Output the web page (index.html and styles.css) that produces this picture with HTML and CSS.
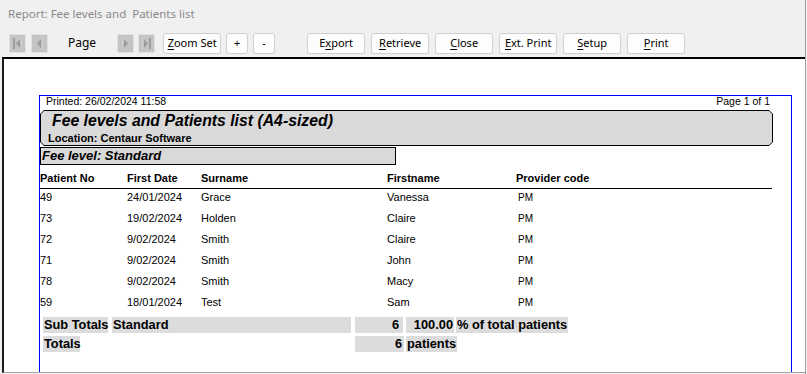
FILE: index.html
```html
<!DOCTYPE html>
<html lang="en">

<head>
    <meta charset="UTF-8">
    <title>Report: Fee levels and Patients list</title>
    <link rel="stylesheet" href="styles.css">
</head>

<body>
    <div class="window">

        <div class="titlebar">Report: Fee levels and&nbsp; Patients list</div>

        <div class="toolbar">
            <div class="navbtn first">
                <svg width="15" height="17" viewBox="0 0 15 17">
                    <rect x="3" y="3" width="2" height="11" fill="#9c9c9c" />
                    <path d="M11 3 L6 8.5 L11 14 Z" fill="#9c9c9c" />
                    <path d="M11 3 L11 14" stroke="#e4e4e4" stroke-width="1" />
                </svg>
            </div>
            <div class="navbtn">
                <svg width="15" height="17" viewBox="0 0 15 17">
                    <path d="M10 3 L5 8.5 L10 14 Z" fill="#9c9c9c" />
                    <path d="M10 3 L10 14" stroke="#e4e4e4" stroke-width="1" />
                </svg>
            </div>
            <span class="pagelabel">Page</span>
            <div class="navbtn next">
                <svg width="15" height="17" viewBox="0 0 15 17">
                    <path d="M5 3 L10 8.5 L5 14 Z" fill="#9c9c9c" />
                    <path d="M5 3 L5 14" stroke="#e4e4e4" stroke-width="1" />
                </svg>
            </div>
            <div class="navbtn">
                <svg width="15" height="17" viewBox="0 0 15 17">
                    <path d="M4 3 L9 8.5 L4 14 Z" fill="#9c9c9c" />
                    <path d="M4 3 L4 14" stroke="#e4e4e4" stroke-width="1" />
                    <rect x="10" y="3" width="2" height="11" fill="#9c9c9c" />
                </svg>
            </div>

            <div class="btn zoom"><u>Z</u>oom Set</div>
            <div class="btn small">+</div>
            <div class="btn small">-</div>

            <div class="btn action first-action">E<u>x</u>port</div>
            <div class="btn action"><u>R</u>etrieve</div>
            <div class="btn action"><u>C</u>lose</div>
            <div class="btn action"><u>E</u>xt. Print</div>
            <div class="btn action"><u>S</u>etup</div>
            <div class="btn action"><u>P</u>rint</div>
        </div>

        <div class="report">
            <div class="sheet">

                <div class="printed">
                    <span>Printed: 26/02/2024 11:58</span>
                    <span>Page 1 of 1</span>
                </div>

                <div class="titlebox">
                    <div class="titlebox-inner">
                        <div class="rep-title">Fee levels and Patients list (A4-sized)</div>
                        <div class="rep-location">Location: Centaur Software</div>
                    </div>
                </div>

                <div class="feelevel">Fee level: Standard</div>

                <div class="row head">
                    <div>Patient No</div>
                    <div>First Date</div>
                    <div>Surname</div>
                    <div>Firstname</div>
                    <div>Provider code</div>
                </div>

                <div class="row">
                    <div>49</div>
                    <div>24/01/2024</div>
                    <div>Grace</div>
                    <div>Vanessa</div>
                    <div class="code">PM</div>
                </div>
                <div class="row">
                    <div>73</div>
                    <div>19/02/2024</div>
                    <div>Holden</div>
                    <div>Claire</div>
                    <div class="code">PM</div>
                </div>
                <div class="row">
                    <div>72</div>
                    <div>9/02/2024</div>
                    <div>Smith</div>
                    <div>Claire</div>
                    <div class="code">PM</div>
                </div>
                <div class="row">
                    <div>71</div>
                    <div>9/02/2024</div>
                    <div>Smith</div>
                    <div>John</div>
                    <div class="code">PM</div>
                </div>
                <div class="row">
                    <div>78</div>
                    <div>9/02/2024</div>
                    <div>Smith</div>
                    <div>Macy</div>
                    <div class="code">PM</div>
                </div>
                <div class="row">
                    <div>59</div>
                    <div>18/01/2024</div>
                    <div>Test</div>
                    <div>Sam</div>
                    <div class="code">PM</div>
                </div>

                <div class="totals subtotals">
                    <div class="cell c-label">Sub Totals</div>
                    <div class="cell c-name">Standard</div>
                    <div class="cell c-count">6</div>
                    <div class="cell c-pct">100.00</div>
                    <div class="cell c-text">% of total patients</div>
                </div>
                <div class="totals grand">
                    <div class="cell c-totals">Totals</div>
                    <div class="cell c-count2">6</div>
                    <div class="cell c-text">patients</div>
                </div>

            </div>
        </div>
    </div>
</body>

</html>
```

FILE: styles.css
```css
html,
body {
    margin: 0;
    padding: 0;
}

* {
    box-sizing: border-box;
}

body {
    background: #f0f0f0;
    font-family: "Noto Sans", "Open Sans", sans-serif;
}

.window {
    width: 806px;
    height: 374px;
    border-right: 1px solid #a0a0a0;
    background: #f0f0f0;
    overflow: hidden;
}

.titlebar {
    height: 28px;
    line-height: 28px;
    padding-left: 8px;
    font-size: 11.5px;
    color: #8a8a8a;
}

/* toolbar */

.toolbar {
    display: flex;
    align-items: center;
    height: 21px;
    margin-top: 5px;
    padding-left: 9px;
}

.navbtn {
    width: 17px;
    height: 19px;
    border: 1px solid #e2e2e2;
    background: #c4c4c4;
    margin-right: 5px;
}

.navbtn svg {
    display: block;
}

.navbtn.next {
    margin-right: 4px;
}

.pagelabel {
    font-size: 12px;
    color: #000;
    margin: 0 21px 0 15px;
    padding-bottom: 3px;
}

.btn {
    height: 21px;
    line-height: 18px;
    border: 1px solid #d0d0d0;
    border-radius: 3px;
    background: #fdfdfd;
    font-size: 11px;
    color: #000;
    text-align: center;
    margin-right: 5px;
}

.btn u {
    text-decoration-thickness: 1px;
    text-underline-offset: 2px;
}

.zoom {
    width: 58px;
    margin-left: 3px;
}

.small {
    width: 22px;
}

.action {
    width: 58px;
    margin-right: 6px;
}

.first-action {
    margin-left: 27px;
}

/* report */

.report {
    height: 316px;
    margin-top: 3px;
    margin-left: 2px;
    border-top: 2px solid #000;
    border-left: 2px solid #1a1a1a;
    border-bottom: 1px solid #a0a0a0;
    background: #fff;
    overflow: hidden;
}

.sheet {
    width: 753px;
    height: 400px;
    margin: 36px 0 0 35px;
    border: 1px solid #0000ff;
    font-family: "Liberation Sans", Arial, sans-serif;
    color: #000;
}

.printed {
    display: flex;
    justify-content: space-between;
    height: 14px;
    line-height: 11px;
    font-size: 10.5px;
    padding: 0 21px 0 6px;
}

.titlebox {
    width: 733px;
    padding: 1px;
    background: #000;
    clip-path: polygon(4px 0, calc(100% - 4px) 0, 100% 4px, 100% calc(100% - 4px), calc(100% - 4px) 100%, 4px 100%, 0 calc(100% - 4px), 0 4px);
}

.titlebox-inner {
    height: 34px;
    background: #d9d9d9;
    clip-path: polygon(3px 0, calc(100% - 3px) 0, 100% 3px, 100% calc(100% - 3px), calc(100% - 3px) 100%, 3px 100%, 0 calc(100% - 3px), 0 3px);
    padding-top: 1px;
}

.rep-title {
    font-size: 15.8px;
    font-weight: 700;
    font-style: italic;
    line-height: 18px;
    padding-left: 11px;
}

.rep-location {
    font-size: 11px;
    font-weight: 700;
    line-height: 13px;
    margin-top: 2px;
    padding-left: 7px;
}

.feelevel {
    width: 356px;
    height: 18px;
    margin-top: 1px;
    border: 1px solid #000;
    background: #d9d9d9;
    font-size: 13px;
    font-weight: 700;
    font-style: italic;
    line-height: 16px;
    padding-left: 1px;
}

.row {
    display: grid;
    grid-template-columns: 87px 74px 186px 129px 1fr;
    width: 732px;
    height: 21px;
    font-size: 11px;
    line-height: 17px;
}

.row.head {
    height: 24px;
    padding-top: 5px;
    line-height: 16px;
    font-weight: 700;
    border-bottom: 1px solid #000;
}

.code {
    font-size: 10px;
    padding-left: 2px;
}

.totals {
    display: flex;
    height: 16px;
    line-height: 16px;
    font-size: 12.8px;
    font-weight: 700;
    padding-left: 3px;
}

.subtotals {
    margin-top: 2px;
}

.grand {
    margin-top: 3px;
}

.cell {
    background: #dcdcdc;
    white-space: nowrap;
    padding-left: 1px;
}

.c-label {
    width: 65px;
    margin-right: 4px;
}

.c-name {
    width: 239px;
    margin-right: 4px;
    padding-left: 1px;
}

.c-count {
    width: 48px;
    margin-right: 3px;
    text-align: right;
    padding-right: 4px;
}

.c-pct {
    width: 48px;
    margin-right: 2px;
    text-align: right;
    padding-right: 1px;
}

.c-totals {
    width: 37px;
    margin-right: 275px;
}

.c-count2 {
    width: 49px;
    margin-right: 2px;
    text-align: right;
    padding-right: 2px;
}

.c-text {
    padding-right: 1px;
}
```
